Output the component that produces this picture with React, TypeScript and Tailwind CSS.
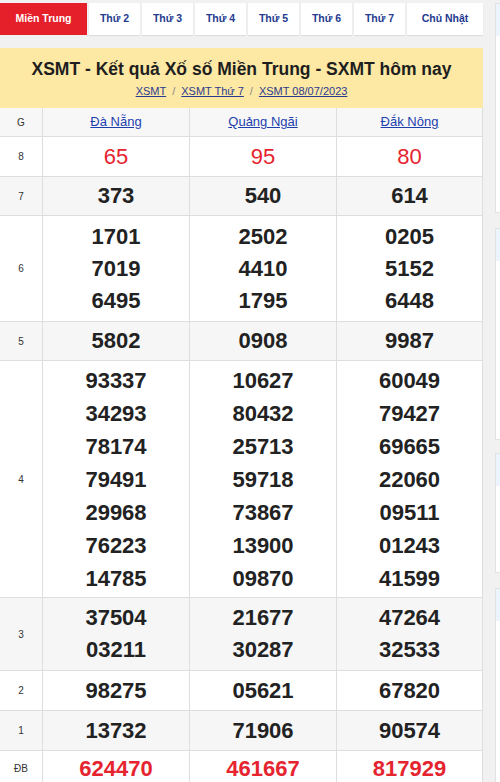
import React from "react";

type Row = { g: string; h: number; vals: string[][]; kind?: "red" | "db"; gray?: boolean; lh?: number };

const rows: Row[] = [
  { g: "8", h: 40, vals: [["65"], ["95"], ["80"]], kind: "red" },
  { g: "7", h: 39, vals: [["373"], ["540"], ["614"]], gray: true },
  { g: "6", h: 106, vals: [["1701", "7019", "6495"], ["2502", "4410", "1795"], ["0205", "5152", "6448"]], lh: 32 },
  { g: "5", h: 39, vals: [["5802"], ["0908"], ["9987"]], gray: true },
  {
    g: "4",
    h: 237,
    lh: 33,
    vals: [
      ["93337", "34293", "78174", "79491", "29968", "76223", "14785"],
      ["10627", "80432", "25713", "59718", "73867", "13900", "09870"],
      ["60049", "79427", "69665", "22060", "09511", "01243", "41599"],
    ],
  },
  { g: "3", h: 73, vals: [["37504", "03211"], ["21677", "30287"], ["47264", "32533"]], gray: true, lh: 32 },
  { g: "2", h: 40, vals: [["98275"], ["05621"], ["67820"]] },
  { g: "1", h: 40, vals: [["13732"], ["71906"], ["90574"]], gray: true },
  { g: "ĐB", h: 36, vals: [["624470"], ["461667"], ["817929"]], kind: "db" },
];

const tabs = ["Thứ 2", "Thứ 3", "Thứ 4", "Thứ 5", "Thứ 6", "Thứ 7"];

export default function App() {
  return (
    <div
      className="w-[500px] h-[782px] overflow-hidden bg-[#f1f1f1] flex items-start gap-[12px]"
      style={{ fontFamily: '"Liberation Sans", Arial, sans-serif' }}
    >
      <div className="w-[483px] shrink-0 flex flex-col">
        {/* tabs */}
        <div className="flex gap-[2px] pt-[3px] h-[36px] shrink-0">
          <div className="w-[87px] h-[32px] bg-[#e5202a] text-white font-bold text-[10.5px] flex items-center justify-center">
            Miền Trung
          </div>
          {tabs.map((t) => (
            <div
              key={t}
              className="w-[51px] h-[32px] bg-white text-[#243a8f] font-bold text-[10.5px] flex items-center justify-center shadow-[0_1px_1px_rgba(0,0,0,0.08)]"
            >
              {t}
            </div>
          ))}
          <div className="flex-1 h-[32px] bg-white text-[#243a8f] font-bold text-[10.5px] flex items-center justify-center shadow-[0_1px_1px_rgba(0,0,0,0.08)]">
            Chủ Nhật
          </div>
        </div>
        <div className="h-[12px] shrink-0" />
        {/* header */}
        <div className="h-[60px] shrink-0 bg-[#fde8a4] flex flex-col items-center pt-[9px]">
          <div className="text-[17.5px] font-bold text-[#1e1e1e] leading-[24px]">
            XSMT - Kết quả Xố số Miền Trung - SXMT hôm nay
          </div>
          <div className="text-[11px] text-[#2b3a8c] leading-[14px] mt-[3px] flex gap-[6px]">
            <span className="underline">XSMT</span>
            <span className="text-[#888]">/</span>
            <span className="underline">XSMT Thứ 7</span>
            <span className="text-[#888]">/</span>
            <span className="underline">XSMT 08/07/2023</span>
          </div>
        </div>
        {/* table */}
        <div className="bg-white border-r border-[#dedede] shrink-0">
          <div className="grid grid-cols-[43px_147px_147px_145px] h-[29px] bg-[#f7f7f7] border-b border-[#dedede]">
            <div className="border-r border-[#dedede] flex items-center justify-center text-[10px] text-[#333]">G</div>
            <div className="border-r border-[#dedede] flex items-center justify-center text-[13px] text-[#1d3fae] underline">Đà Nẵng</div>
            <div className="border-r border-[#dedede] flex items-center justify-center text-[13px] text-[#1d3fae] underline">Quảng Ngãi</div>
            <div className="flex items-center justify-center text-[13px] text-[#1d3fae] underline">Đắk Nông</div>
          </div>
          {rows.map((r) => (
            <div
              key={r.g}
              className={`grid grid-cols-[43px_147px_147px_145px] border-b border-[#dedede] ${r.gray ? "bg-[#f6f6f6]" : "bg-white"}`}
              style={{ height: r.h }}
            >
              <div className="border-r border-[#dedede] flex items-center justify-center text-[10px] text-[#333]">{r.g}</div>
              {r.vals.map((col, ci) => (
                <div
                  key={ci}
                  className={`flex flex-col items-center justify-center ${ci < 2 ? "border-r border-[#dedede]" : ""}`}
                >
                  {col.map((v) => (
                    <div
                      key={v}
                      className={
                        r.kind === "red"
                          ? "text-[22px] text-[#e5242f] font-normal"
                          : r.kind === "db"
                          ? "text-[22px] text-[#e5242f] font-bold"
                          : "text-[22px] text-[#222] font-bold"
                      }
                      style={{ lineHeight: `${r.lh ?? 26}px` }}
                    >
                      {v}
                    </div>
                  ))}
                </div>
              ))}
            </div>
          ))}
        </div>
      </div>
      {/* sidebar */}
      <div className="w-[300px] shrink-0 flex flex-col pt-[3px]">
        <div className="h-[210px] shrink-0 bg-white border border-[#e2e2e2]">
          <div className="h-[32px] bg-[#eef4fd]" />
        </div>
        <div className="h-[15px] shrink-0" />
        <div className="h-[212px] shrink-0 bg-white border border-[#e2e2e2]">
          <div className="h-[32px] bg-[#eef4fd]" />
        </div>
        <div className="h-[13px] shrink-0" />
        <div className="h-[120px] shrink-0 bg-white border border-[#e2e2e2]">
          <div className="h-[32px] bg-[#eef4fd]" />
        </div>
        <div className="h-[15px] shrink-0" />
        <div className="h-[300px] shrink-0 bg-white border border-[#e2e2e2]">
          <div className="h-[32px] bg-[#eef4fd]" />
        </div>
      </div>
    </div>
  );
}
